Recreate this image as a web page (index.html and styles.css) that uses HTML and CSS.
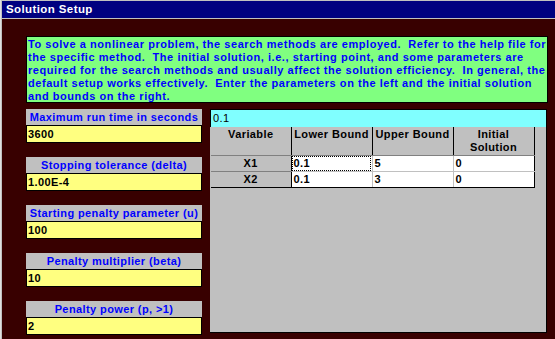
FILE: index.html
```html
<!DOCTYPE html>
<html>
<head>
<meta charset="utf-8">
<link rel="stylesheet" href="styles.css">
</head>
<body>
<div class="window">
  <div class="titlebar">Solution Setup</div>
  <div class="client">
    <div class="intro">To solve a nonlinear problem, the search methods are employed.&nbsp; Refer to the help file for<br>the specific method.&nbsp; The initial solution, i.e., starting point, and some parameters are<br>required for the search methods and usually affect the solution efficiency.&nbsp; In general, the<br>default setup works effectively.&nbsp; Enter the parameters on the left and the initial solution<br>and bounds on the right.</div>
    <div class="main">
      <div class="params">
        <div class="group"><div class="label">Maximum run time in seconds</div><div class="value">3600</div></div>
        <div class="group"><div class="label">Stopping tolerance (delta)</div><div class="value">1.00E-4</div></div>
        <div class="group"><div class="label">Starting penalty parameter (u)</div><div class="value">100</div></div>
        <div class="group"><div class="label">Penalty multiplier (beta)</div><div class="value">10</div></div>
        <div class="group"><div class="label">Penalty power (p, &gt;1)</div><div class="value">2</div></div>
      </div>
      <div class="panel">
        <div class="editbar">0.1</div>
        <table class="grid">
          <tr>
            <th>Variable</th>
            <th>Lower Bound</th>
            <th>Upper Bound</th>
            <th class="last">Initial<br>Solution</th>
          </tr>
          <tr>
            <td class="var">X1</td>
            <td><span class="focus">0.1</span></td>
            <td>5</td>
            <td class="last">0</td>
          </tr>
          <tr class="lastrow">
            <td class="var">X2</td>
            <td>0.1</td>
            <td>3</td>
            <td class="last">0</td>
          </tr>
        </table>
      </div>
    </div>
  </div>
</div>
</body>
</html>
```

FILE: styles.css
```css
html, body {
  margin: 0;
  padding: 0;
  width: 555px;
  height: 339px;
  overflow: hidden;
  background: #c0c0c0;
  font-family: "Liberation Sans", Arial, sans-serif;
  font-size: 11px;
  font-weight: bold;
  letter-spacing: 0.4px;
}

.window {
  width: 555px;
  height: 339px;
  padding-top: 1px;
  box-sizing: border-box;
  border-left: 1px solid #e0e0e0;
  display: flex;
  flex-direction: column;
}

.titlebar {
  height: 17px;
  line-height: 17px;
  margin-left: 1px;
  background: #000080;
  color: #ffffff;
  padding-left: 4px;
  font-size: 11.5px;
  letter-spacing: 0.4px;
}

.client {
  margin-top: 1px;
  margin-left: 1px;
  flex: 1;
  background: #380000;
  padding: 17px 7px 0 24px;
}

.intro {
  background: #80ff80;
  border: 1px solid #000;
  color: #0000ff;
  line-height: 13px;
  padding: 1px 0 0 1px;
  height: 64px;
  white-space: nowrap;
  letter-spacing: 0.55px;
}

.main {
  display: flex;
  gap: 8px;
  margin-top: 6px;
}

.params {
  width: 176px;
  display: flex;
  flex-direction: column;
  gap: 14px;
}

.label {
  height: 16px;
  line-height: 16px;
  background: #c0c0c0;
  color: #0000ff;
  text-align: center;
  white-space: nowrap;
}

.value {
  height: 18px;
  line-height: 16px;
  box-sizing: border-box;
  background: #ffff80;
  border: 1px solid #000;
  color: #000;
  padding-left: 1px;
}

.panel {
  width: 337px;
  height: 224px;
  box-sizing: border-box;
  background: #c0c0c0;
  border-right: 1px solid #000;
  border-bottom: 1px solid #000;
}

.editbar {
  height: 18px;
  line-height: 17px;
  box-sizing: border-box;
  background: #80ffff;
  border-top: 1px solid #000;
  border-left: 1px solid #000;
  font-weight: normal;
  color: #000;
  padding-left: 2px;
}

.grid {
  border-collapse: collapse;
  margin-left: 1px;
  table-layout: fixed;
}

.grid th, .grid td {
  padding: 0;
  color: #000;
  font-weight: bold;
  box-sizing: border-box;
}

.grid th {
  width: 81px;
  height: 28px;
  line-height: 13px;
  vertical-align: top;
  text-align: center;
  background: #c0c0c0;
  border-right: 1px solid #000;
  border-bottom: 1px solid #808080;
  padding-top: 1px;
}

.grid th:first-child {
  width: 80px;
}

.grid td {
  height: 16px;
  line-height: 14px;
  background: #ffffff;
  border-right: 1px solid #c0c0c0;
  border-bottom: 1px solid #c0c0c0;
  padding-left: 2px;
  text-align: left;
}

.grid td.var {
  background: #c0c0c0;
  text-align: center;
  padding-left: 0;
  border-right: 1px solid #000;
  border-bottom: 1px solid #808080;
}

.grid .last {
  border-right: 1px solid #000;
}

.grid tr.lastrow td {
  border-bottom: 1px solid #000;
}

.focus {
  display: inline-block;
  width: 76px;
  outline: 1px dotted #000;
  outline-offset: 0;
  margin-left: -1px;
  padding-left: 1px;
  line-height: 13px;
}
```
